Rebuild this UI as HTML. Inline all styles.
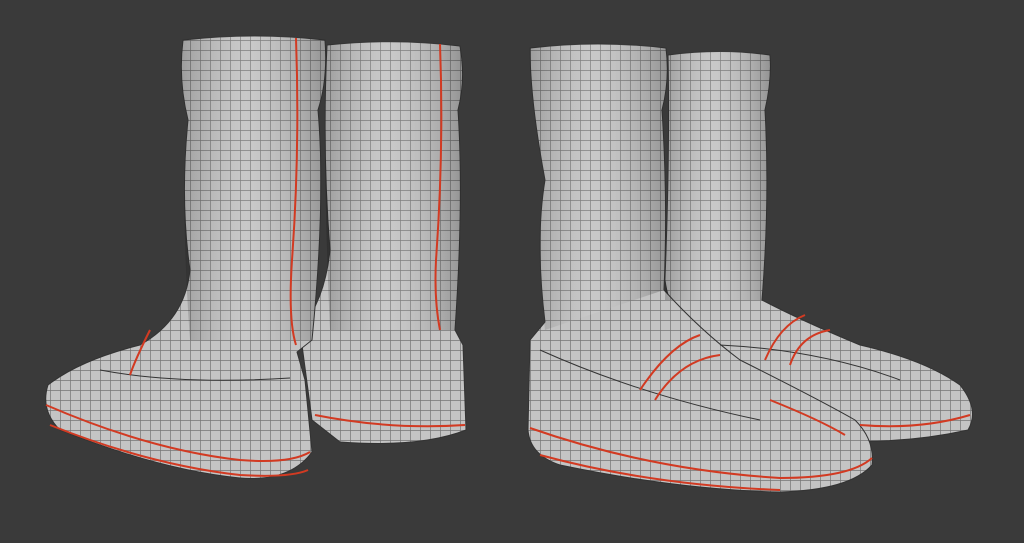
<!DOCTYPE html>
<html><head><meta charset="utf-8"><style>html,body{margin:0;padding:0;background:#3a3a3a;width:1024px;height:543px;overflow:hidden}</style></head>
<body>
<svg width="1024" height="543" viewBox="0 0 1024 543" xmlns="http://www.w3.org/2000/svg">
<defs>
<pattern id="g" width="10" height="10" patternUnits="userSpaceOnUse">
<rect width="10" height="10" fill="#c4c4c4"/>
<path d="M0 0.5H10M0.5 0V10" stroke="#4a4a4a" stroke-width="0.7" opacity="0.65"/>
</pattern>
<linearGradient id="sh" x1="0" x2="1" y1="0" y2="0">
<stop offset="0" stop-color="#000" stop-opacity="0.2"/>
<stop offset="0.45" stop-color="#fff" stop-opacity="0.08"/>
<stop offset="1" stop-color="#000" stop-opacity="0.25"/>
</linearGradient>
</defs>
<g fill="url(#g)" stroke="#333" stroke-width="1">
<path d="M327 45 Q395 38 460 46 Q466 80 458 110 Q464 200 455 330 L463 345 L466 430 Q420 448 340 442 L312 420 L300 330 Q325 300 330 250 Q322 150 327 45Z"/>
<path d="M668 55 Q720 48 770 55 Q772 80 765 110 Q770 200 762 300 Q800 320 860 345 Q925 360 960 385 Q980 410 968 430 Q900 445 830 440 L790 435 L705 350 Q670 320 665 280 Q670 150 668 55Z"/>
<path d="M183 40 Q255 32 325 40 Q328 80 318 110 Q326 200 312 340 L297 352 L305 380 L312 452 Q290 482 240 478 Q160 470 60 430 Q40 410 48 385 Q80 360 140 345 Q185 320 190 270 Q180 200 188 120 Q178 80 183 40Z"/>
<path d="M530 48 Q598 40 666 48 Q670 80 662 110 Q668 200 664 290 Q700 330 740 360 Q820 400 855 420 Q875 440 872 465 Q850 490 780 492 Q680 490 560 465 Q530 455 528 430 L530 340 L545 322 Q535 240 545 180 Q530 100 530 48Z"/>
</g>
<g fill="url(#sh)" stroke="none">
<path d="M183 40 Q255 32 325 40 Q328 80 318 110 Q326 200 312 340 L190 340 Q180 200 188 120 Q178 80 183 40Z"/>
<path d="M327 45 Q395 38 460 46 Q466 80 458 110 Q464 200 455 330 L330 330 Q322 150 327 45Z"/>
<path d="M530 48 Q598 40 666 48 Q670 80 662 110 Q668 200 664 290 L545 330 Q535 240 545 180 Q530 100 530 48Z"/>
<path d="M668 55 Q720 48 770 55 Q772 80 765 110 Q770 200 762 300 L665 300 Q670 150 668 55Z"/>
</g>
<g fill="none" stroke="#333" stroke-width="1">
<path d="M100 370 Q180 385 290 378"/>
<path d="M540 350 Q640 395 760 420"/>
<path d="M720 345 Q820 350 900 380"/>
</g>
<g fill="none" stroke="#d23a22" stroke-width="2">
<path d="M296 38 Q300 150 292 260 Q288 320 296 345"/>
<path d="M440 44 Q444 150 436 260 Q434 300 440 330"/>
<path d="M46 405 Q150 450 240 460 Q290 464 310 452"/>
<path d="M50 425 Q150 465 240 475 Q290 478 308 470"/>
<path d="M315 415 Q390 430 465 425"/>
<path d="M530 428 Q650 470 780 478 Q850 478 872 458"/>
<path d="M540 455 Q650 485 780 490"/>
<path d="M655 400 Q680 360 720 355"/>
<path d="M640 390 Q670 345 700 335"/>
<path d="M770 400 Q820 420 845 435"/>
<path d="M790 365 Q800 335 830 330"/>
<path d="M765 360 Q780 325 805 315"/>
<path d="M860 425 Q920 430 970 415"/>
<path d="M150 330 Q135 360 130 375"/>
</g>
</svg>
</body></html>
